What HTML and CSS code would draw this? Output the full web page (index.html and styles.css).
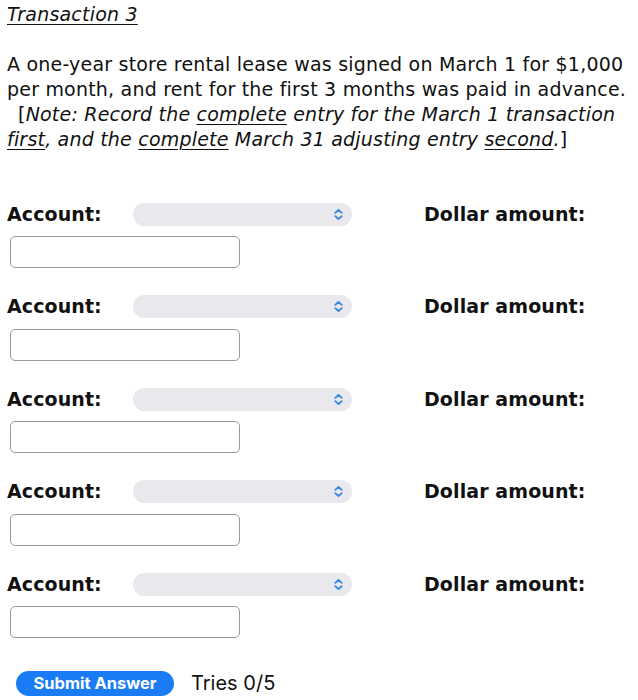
FILE: index.html
```html
<!DOCTYPE html>
<html>
<head>
<meta charset="utf-8">
<link rel="stylesheet" href="styles.css">
</head>
<body>
<div class="page">
  <div class="title">Transaction 3</div>
  <p class="text">A one-year store rental lease was signed on March 1 for $1,000 per month, and rent for the first 3 months was paid in advance.<br><span class="indent">[<i>Note: Record the <u>complete</u> entry for the March 1 transaction <u>first</u>, and the <u>complete</u> March 31 adjusting entry <u>second</u>.</i>]</span></p>

  <div class="entries">
    <div class="entry">
      <div class="row">
        <span class="label">Account:</span>
        <div class="select"><svg class="chev" viewBox="0 0 10 12" width="11" height="13"><path d="M2 4.5 L5 1.8 L8 4.5 M2 7.5 L5 10.2 L8 7.5" fill="none" stroke="#3d87da" stroke-width="1.7" stroke-linecap="round" stroke-linejoin="round"/></svg></div>
        <span class="label dollar">Dollar amount:</span>
      </div>
      <div class="input"></div>
    </div>
    <div class="entry">
      <div class="row">
        <span class="label">Account:</span>
        <div class="select"><svg class="chev" viewBox="0 0 10 12" width="11" height="13"><path d="M2 4.5 L5 1.8 L8 4.5 M2 7.5 L5 10.2 L8 7.5" fill="none" stroke="#3d87da" stroke-width="1.7" stroke-linecap="round" stroke-linejoin="round"/></svg></div>
        <span class="label dollar">Dollar amount:</span>
      </div>
      <div class="input"></div>
    </div>
    <div class="entry">
      <div class="row">
        <span class="label">Account:</span>
        <div class="select"><svg class="chev" viewBox="0 0 10 12" width="11" height="13"><path d="M2 4.5 L5 1.8 L8 4.5 M2 7.5 L5 10.2 L8 7.5" fill="none" stroke="#3d87da" stroke-width="1.7" stroke-linecap="round" stroke-linejoin="round"/></svg></div>
        <span class="label dollar">Dollar amount:</span>
      </div>
      <div class="input"></div>
    </div>
    <div class="entry">
      <div class="row">
        <span class="label">Account:</span>
        <div class="select"><svg class="chev" viewBox="0 0 10 12" width="11" height="13"><path d="M2 4.5 L5 1.8 L8 4.5 M2 7.5 L5 10.2 L8 7.5" fill="none" stroke="#3d87da" stroke-width="1.7" stroke-linecap="round" stroke-linejoin="round"/></svg></div>
        <span class="label dollar">Dollar amount:</span>
      </div>
      <div class="input"></div>
    </div>
    <div class="entry">
      <div class="row">
        <span class="label">Account:</span>
        <div class="select"><svg class="chev" viewBox="0 0 10 12" width="11" height="13"><path d="M2 4.5 L5 1.8 L8 4.5 M2 7.5 L5 10.2 L8 7.5" fill="none" stroke="#3d87da" stroke-width="1.7" stroke-linecap="round" stroke-linejoin="round"/></svg></div>
        <span class="label dollar">Dollar amount:</span>
      </div>
      <div class="input"></div>
    </div>
  </div>

  <div class="submit-row">
    <button class="submit">Submit Answer</button>
    <span class="tries">Tries 0/5</span>
  </div>
</div>
</body>
</html>
```

FILE: styles.css
```css
html, body {
  margin: 0;
  padding: 0;
  background: #ffffff;
}
.page {
  padding: 2px 0 0 7px;
  font-family: "DejaVu Sans", Verdana, sans-serif;
  font-size: 19px;
  letter-spacing: 0.2px;
  line-height: 25px;
  color: #111111;
}
.title {
  font-style: italic;
  text-decoration: underline;
  text-underline-offset: 3px;
  text-decoration-thickness: 1px;
}
.text {
  margin: 25px 0 0 0;
}
.indent {
  padding-left: 11px;
}
.text u {
  text-underline-offset: 3px;
  text-decoration-thickness: 1px;
}
.entries {
  margin-top: 50px;
  display: flex;
  flex-direction: column;
}
.entry {
  display: flex;
  flex-direction: column;
  padding-bottom: 26.5px;
}
.row {
  display: flex;
  align-items: center;
  height: 24px;
}
.label {
  font-weight: bold;
  width: 126px;
  letter-spacing: 0.1px;
}
.dollar {
  width: auto;
  margin-left: 72px;
}
.select {
  width: 219px;
  height: 23px;
  border-radius: 12px;
  background: #e9e9ed;
  display: flex;
  align-items: center;
  justify-content: flex-end;
  padding-right: 8px;
  box-sizing: border-box;
}
.chev {
  display: block;
}
.input {
  margin-top: 10px;
  margin-left: 3px;
  width: 230px;
  height: 32px;
  box-sizing: border-box;
  border: 1.5px solid #9a9a9a;
  border-radius: 5px;
  background: #fff;
}
.submit-row {
  display: flex;
  align-items: center;
  margin-top: 6px;
  padding-left: 9px;
}
.submit {
  width: 158px;
  height: 25px;
  border: none;
  border-radius: 13px;
  background: #1a7cf4;
  color: #ffffff;
  font-family: Inter, "Open Sans", sans-serif;
  font-weight: bold;
  font-size: 16.5px;
  letter-spacing: 0;
  padding: 0;
}
.tries {
  margin-left: 17px;
  font-family: Inter, "Open Sans", sans-serif;
  font-size: 20px;
  letter-spacing: 0;
  color: #111;
}
```
